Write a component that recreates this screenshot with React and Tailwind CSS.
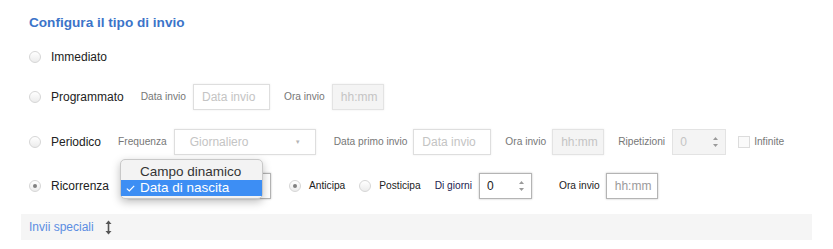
import React from "react";

const Radio = ({ checked }) => (
  <span className="w-[12px] h-[12px] rounded-full border border-[#d6d6d6] bg-linear-to-b from-white to-[#ececec] flex items-center justify-center shrink-0">
    {checked && <span className="w-[4px] h-[4px] rounded-full bg-[#808080]" />}
  </span>
);

const Spinner = () => (
  <span className="flex flex-col items-center gap-[4px] mr-[7px]">
    <svg width="5" height="3" viewBox="0 0 5 3">
      <path d="M2.5 0 L5 3 L0 3 Z" fill="#9a9a9a" />
    </svg>
    <svg width="5" height="3" viewBox="0 0 5 3">
      <path d="M0 0 L5 0 L2.5 3 Z" fill="#9a9a9a" />
    </svg>
  </span>
);

const Field = ({ w, text, disabled, strong, className = "" }) => (
  <div
    className={`h-[26px] flex items-center pl-[8px] text-[12px] ${w} ${
      disabled
        ? "bg-[#f4f4f4] border border-[#e3e3e3] shadow-[0_0_2px_rgba(0,0,0,0.08)]"
        : strong
        ? "bg-white border border-[#b4b4b4] shadow-[0_0_2px_rgba(0,0,0,0.25)]"
        : "bg-white border border-[#dedede] shadow-[0_0_2px_rgba(0,0,0,0.08)]"
    } ${className}`}
  >
    <span className={strong ? "text-[#9a9a9a]" : "text-[#c4c4c4]"}>{text}</span>
  </div>
);

const App = () => {
  return (
    <div className="w-[833px] h-[249px] bg-white px-[21px] pt-[14px] font-['Liberation_Sans',Arial,sans-serif] text-[#222]">
      <div className="pl-[8px] h-[18px] leading-[18px] text-[13.6px] font-bold text-[#3b74c9]">
        Configura il tipo di invio
      </div>

      <div className="pl-[8px] mt-[12px] h-[26px] flex items-center">
        <Radio />
        <span className="ml-[10px] text-[12px]">Immediato</span>
      </div>

      <div className="pl-[8px] mt-[14px] h-[26px] flex items-center">
        <Radio />
        <span className="ml-[10px] text-[12px]">Programmato</span>
        <span className="ml-[17px] text-[10.2px] text-[#777]">Data invio</span>
        <Field w="w-[77px]" text="Data invio" className="ml-[7px]" />
        <span className="ml-[14px] text-[10.2px] text-[#777]">Ora invio</span>
        <Field w="w-[52px]" text="hh:mm" disabled className="ml-[7px]" />
      </div>

      <div className="pl-[8px] mt-[19px] h-[26px] flex items-center">
        <Radio />
        <span className="ml-[10px] text-[12px]">Periodico</span>
        <span className="ml-[17px] text-[10.2px] text-[#777]">Frequenza</span>
        <div className="ml-[7px] w-[142px] h-[26px] flex items-center justify-between pl-[15px] pr-[14px] border border-[#dedede] shadow-[0_0_2px_rgba(0,0,0,0.08)] text-[12px] text-[#c4c4c4]">
          <span>Giornaliero</span>
          <span className="text-[6px] text-[#b5b5b5]">▼</span>
        </div>
        <span className="ml-[18px] text-[10.2px] text-[#777]">Data primo invio</span>
        <Field w="w-[78px]" text="Data invio" className="ml-[6px]" />
        <span className="ml-[14px] text-[10.2px] text-[#777]">Ora invio</span>
        <Field w="w-[52px]" text="hh:mm" disabled className="ml-[6px]" />
        <span className="ml-[14px] text-[10.2px] text-[#777]">Ripetizioni</span>
        <div className="ml-[7px] w-[54px] h-[26px] flex items-center justify-between pl-[7px] bg-[#f4f4f4] border border-[#e3e3e3] text-[12px] text-[#c4c4c4]">
          <span>0</span>
          <Spinner />
        </div>
        <span className="ml-[12px] w-[12px] h-[12px] border border-[#dcdcdc] bg-[#fafafa]" />
        <span className="ml-[4px] text-[10.2px] text-[#777]">Infinite</span>
      </div>

      <div className="pl-[8px] mt-[18px] h-[26px] flex items-center">
        <Radio checked />
        <span className="ml-[10px] text-[12px]">Ricorrenza</span>
        <div className="relative ml-[19px] w-[143px] h-[26px] border border-[#b4b4b4] shadow-[0_0_2px_rgba(0,0,0,0.25)] bg-white">
          <div className="absolute left-[-9px] top-[-15px] w-[143px] h-[40px] rounded-[5px] border border-[#c8c8c8] bg-[#f3f3f3] shadow-[0_3px_8px_rgba(0,0,0,0.25)] pt-[3px] text-[13.5px]">
            <div className="h-[17px] leading-[17px] pl-[19px] text-[#333]">Campo dinamico</div>
            <div className="h-[16px] leading-[16px] flex items-center bg-[#3d8ef4] text-white">
              <span className="w-[19px] flex justify-center">
                <svg width="9" height="7" viewBox="0 0 9 7">
                  <path d="M0.8 3.6 L3.3 6 L8.2 0.8" fill="none" stroke="#fff" strokeWidth="1.2" />
                </svg>
              </span>
              <span>Data di nascita</span>
            </div>
          </div>
        </div>
        <span className="ml-[18px]">
          <Radio checked />
        </span>
        <span className="ml-[8px] text-[10.2px] text-[#222]">Anticipa</span>
        <span className="ml-[14px]">
          <Radio />
        </span>
        <span className="ml-[8px] text-[10.2px] text-[#222]">Posticipa</span>
        <span className="ml-[14px] text-[10.2px] text-[#1d1d52]">Di giorni</span>
        <div className="ml-[7px] w-[53px] h-[26px] flex items-center justify-between pl-[7px] bg-white border border-[#b4b4b4] shadow-[0_0_2px_rgba(0,0,0,0.25)] text-[12px] text-[#222]">
          <span>0</span>
          <Spinner />
        </div>
        <span className="ml-[27px] text-[10.2px] text-[#222]">Ora invio</span>
        <Field w="w-[52px]" text="hh:mm" strong className="ml-[6px]" />
      </div>

      <div className="mt-[15px] h-[26px] bg-[#f5f5f5] pl-[8px] flex items-center">
        <span className="text-[12px] text-[#5b8de2]">Invii speciali</span>
        <svg className="ml-[11px]" width="7" height="15" viewBox="0 0 7 15">
          <path d="M3.5 0.5 L6.5 4 L0.5 4 Z" fill="#555" />
          <path d="M3.5 14.5 L6.5 11 L0.5 11 Z" fill="#555" />
          <rect x="2.7" y="3.5" width="1.6" height="8" fill="#555" />
        </svg>
      </div>
    </div>
  );
};

export default App;
